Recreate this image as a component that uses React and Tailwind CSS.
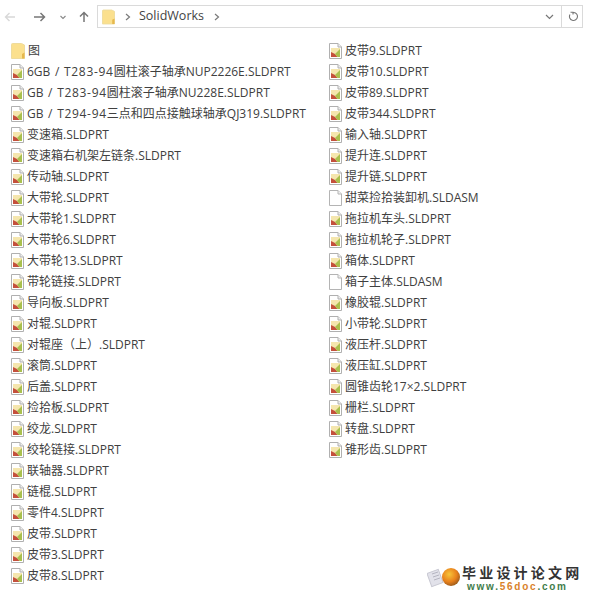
const left = ["图","6GB / T283-94圆柱滚子轴承NUP2226E.SLDPRT","GB / T283-94圆柱滚子轴承NU228E.SLDPRT","GB / T294-94三点和四点接触球轴承QJ319.SLDPRT","变速箱.SLDPRT","变速箱右机架左链条.SLDPRT","传动轴.SLDPRT","大带轮.SLDPRT","大带轮1.SLDPRT","大带轮6.SLDPRT","大带轮13.SLDPRT","带轮链接.SLDPRT","导向板.SLDPRT","对辊.SLDPRT","对辊座（上）.SLDPRT","滚筒.SLDPRT","后盖.SLDPRT","捡拾板.SLDPRT","绞龙.SLDPRT","绞轮链接.SLDPRT","联轴器.SLDPRT","链棍.SLDPRT","零件4.SLDPRT","皮带.SLDPRT","皮带3.SLDPRT","皮带8.SLDPRT"];
const right = ["皮带9.SLDPRT","皮带10.SLDPRT","皮带89.SLDPRT","皮带344.SLDPRT","输入轴.SLDPRT","提升连.SLDPRT","提升链.SLDPRT","甜菜捡拾装卸机.SLDASM","拖拉机车头.SLDPRT","拖拉机轮子.SLDPRT","箱体.SLDPRT","箱子主体.SLDASM","橡胶辊.SLDPRT","小带轮.SLDPRT","液压杆.SLDPRT","液压缸.SLDPRT","圆锥齿轮17×2.SLDPRT","栅栏.SLDPRT","转盘.SLDPRT","锥形齿.SLDPRT"];

function FolderIcon({ w = 14, h = 16 }) {
  return (
    <svg width={w} height={h} viewBox="0 0 14 16" className="shrink-0">
      <path d="M0.5 1.5 Q0.5 0.5 1.5 0.5 H10.5 L13.5 2 V15.5 H0.5 Z" fill="#fbe08e" stroke="#eedb9c" />
      <path d="M11 15.5 V11 L13.5 9.5 V15.5 Z" fill="#e6b84e" />
    </svg>
  );
}
function PartIcon() {
  return (
    <svg width="13" height="16" viewBox="0 0 13 16" className="shrink-0">
      <path d="M0.5 0.5 H9 L12.5 4 V15.5 H0.5 Z" fill="#fff" stroke="#b0b0b0" />
      <path d="M9 0.5 V4 H12.5" fill="#eee" stroke="#b0b0b0" />
      <rect x="2" y="5" width="9" height="9" fill="#f5e6ae" />
      <path d="M2 14 V9 L6 11 L8.5 14 Z" fill="#c4503c" />
      <path d="M6 11 L11 6 V14 H8.5 Z" fill="#a9c04e" />
    </svg>
  );
}
function BlankIcon() {
  return (
    <svg width="13" height="16" viewBox="0 0 13 16" className="shrink-0">
      <path d="M0.5 0.5 H9 L12.5 4 V15.5 H0.5 Z" fill="#fff" stroke="#b4b4b4" />
      <path d="M9 0.5 V4 H12.5" fill="#f2f2f2" stroke="#b4b4b4" />
    </svg>
  );
}
function Name({ name }) {
  const m = name.match(/^(.*\/ )(T\d+-\d+)(.*)$/);
  if (!m) return <span>{name}</span>;
  return (
    <span>
      <span className="[word-spacing:1.5px]">{m[1]}</span>
      <span className="tracking-[0.7px]">{m[2]}</span>
      {m[3]}
    </span>
  );
}
function Row({ name }) {
  const isFolder = name === "图";
  const isAsm = name.endsWith(".SLDASM");
  return (
    <div className="flex h-[21px] items-center gap-[3px] whitespace-nowrap">
      {isFolder ? <FolderIcon /> : isAsm ? <BlankIcon /> : <PartIcon />}
      <Name name={name} />
    </div>
  );
}
function Chevron() {
  return (
    <svg width="6" height="8" viewBox="0 0 6 8"><path d="M1 1 L4.5 4 L1 7" fill="none" stroke="#7a7a7a" strokeWidth="1.2" /></svg>
  );
}
export default function App() {
  return (
    <div className="relative h-[595px] w-[591px] overflow-hidden bg-white text-[12px] text-[#404040]" style={{ fontFamily: '"Open Sans","Noto Sans CJK SC",sans-serif' }}>
      <div className="flex h-[40px] items-start pt-[5px]">
        <div className="flex h-[24px] w-[97px] items-center">
          <svg width="12" height="12" viewBox="0 0 12 12" className="ml-[4px]"><path d="M11 6 H1.5 M5.5 2 L1.5 6 L5.5 10" fill="none" stroke="#d8d8d8" strokeWidth="1.4" /></svg>
          <svg width="13" height="12" viewBox="0 0 13 12" className="ml-[17px]"><path d="M1 6 H11.5 M7.5 2 L11.5 6 L7.5 10" fill="none" stroke="#777" strokeWidth="1.5" /></svg>
          <svg width="6" height="5" viewBox="0 0 6 5" className="ml-[14px]"><path d="M0.5 1 L3 3.5 L5.5 1" fill="none" stroke="#888" strokeWidth="1.1" /></svg>
          <svg width="12" height="12" viewBox="0 0 12 12" className="ml-[12px]"><path d="M6 11 V1.5 M2 5.5 L6 1.5 L10 5.5" fill="none" stroke="#777" strokeWidth="1.5" /></svg>
        </div>
        <div className="flex h-[23px] w-[486px] items-center border border-[#dadada]">
          <div className="ml-[4px] flex"><FolderIcon w={13} h={16} /></div>
          <div className="ml-[10px]"><Chevron /></div>
          <span className="ml-[8px] text-[12.5px] text-[#444]">SolidWorks</span>
          <div className="ml-[10px]"><Chevron /></div>
          <div className="flex-1" />
          <svg width="9" height="6" viewBox="0 0 9 6" className="mr-[7px]"><path d="M1 1 L4.5 4.5 L8 1" fill="none" stroke="#777" strokeWidth="1.2" /></svg>
          <div className="flex h-full w-[21px] items-center justify-center border-l border-[#dadada]">
            <svg width="11" height="12" viewBox="0 0 11 12"><path d="M3.5 1.2 H6 V3.6 M6 1.5 A4 4 0 1 1 3 3.5" fill="none" stroke="#777" strokeWidth="1.1" /></svg>
          </div>
        </div>
      </div>
      <div className="flex">
        <div className="ml-[11px] w-[318px]">{left.map((n) => <Row key={n} name={n} />)}</div>
        <div>{right.map((n) => <Row key={n} name={n} />)}</div>
      </div>
      <div className="absolute left-[427px] top-[564px] flex items-start gap-[1px]">
        <svg width="34" height="26" viewBox="0 0 34 26">
          <defs>
            <radialGradient id="ball" cx="0.4" cy="0.35" r="0.75">
              <stop offset="0" stopColor="#f7c53a" />
              <stop offset="0.55" stopColor="#e9821c" />
              <stop offset="0.85" stopColor="#a8601c" />
              <stop offset="1" stopColor="#4f8038" />
            </radialGradient>
          </defs>
          <rect x="2" y="7" width="12" height="14" fill="#e2e2ea" stroke="#c8c8d2" transform="rotate(-20 8 14)" />
          <path d="M5 10 L11 8 M6 13 L12 11 M7 16 L13 14" stroke="#b4b4c0" />
          <circle cx="24" cy="13" r="9" fill="url(#ball)" />
        </svg>
        <div className="flex flex-col items-start">
          <span className="h-[17px] text-[14px] font-bold leading-[17px] tracking-[3.2px] text-[#333]">毕业设计论文网</span>
          <span className="ml-[5px] h-[12px] text-[10px] font-bold leading-[12px] tracking-[1.75px] text-[#3f7d4b]" style={{ fontFamily: '"Liberation Sans",sans-serif' }}>www.<span className="text-[#d9822b]">56doc</span>.com</span>
        </div>
      </div>
    </div>
  );
}
